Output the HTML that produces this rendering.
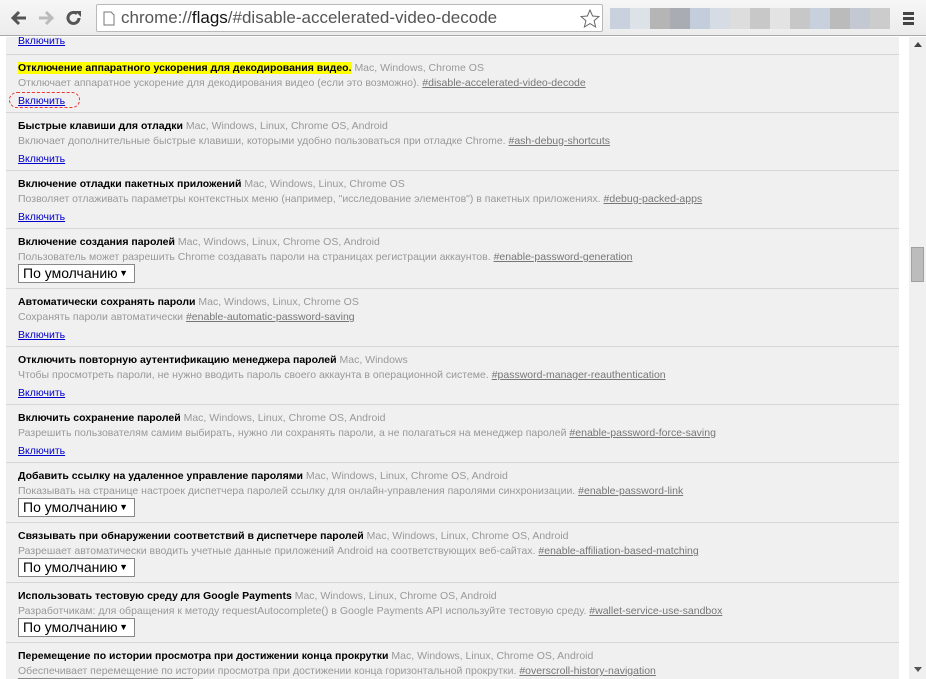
<!DOCTYPE html><html><head><meta charset="utf-8"><style>
*{margin:0;padding:0;box-sizing:border-box}
html,body{width:926px;height:679px;overflow:hidden}
body{background:#fff;font-family:"Liberation Sans","Noto Sans CJK SC",sans-serif;position:relative}
#tb{position:absolute;left:0;top:0;width:926px;height:36px;background:linear-gradient(#f6f6f6,#ececec);border-bottom:1px solid #a8a8a8}
#omni{position:absolute;left:96px;top:4px;width:507px;height:28px;background:#fff;border:1px solid #b9b9b9;border-radius:2px;font-size:17px;color:#555;line-height:26px;padding-left:24px}
#omni b{font-weight:normal;color:#111}
#content{position:absolute;left:6px;top:37px;width:893px;height:642px;background:#f0f0f0}
#sb{position:absolute;left:909px;top:37px;width:17px;height:642px;background:#f0f0f0}
.row{position:absolute;left:6px;width:893px;border-top:1px solid #d6d6d6;font-size:10.5px}
.t{position:absolute;left:12px;color:#000;font-weight:bold;white-space:nowrap}
.t span{font-weight:normal;color:#999}
.d{position:absolute;left:12px;color:#999;white-space:nowrap}
.d u{color:#777}
.l{position:absolute;left:12px;color:#00c;text-decoration:underline;font-size:10.5px}
.s{position:absolute;left:12px;width:117px;height:19px;background:#fff;border:1px solid #888;font-size:14px;line-height:17px;padding-left:4px;color:#000}
.s i{position:absolute;right:6px;top:0;font-style:normal;font-size:9px}
.px{position:absolute;width:20px;height:21px}
</style></head><body>
<div id="tb">
<svg style="position:absolute;left:10px;top:10px" width="18" height="16"><path d="M16 8H4M9 2L3 8l6 6" stroke="#555" stroke-width="3" fill="none"/></svg>
<svg style="position:absolute;left:37px;top:10px" width="18" height="16"><path d="M2 8h12M9 2l6 6-6 6" stroke="#bbb" stroke-width="3" fill="none"/></svg>
<svg style="position:absolute;left:65px;top:9px" width="18" height="18"><path d="M14 9a5.5 5.5 0 1 1-2-4.3" stroke="#555" stroke-width="3" fill="none"/><path d="M10 2h6v6z" fill="#555"/></svg>
<div id="omni">chrome://<b>flags</b>/#disable-accelerated-video-decode
<svg style="position:absolute;left:6px;top:6px" width="12" height="15"><path d="M1 1h7l3 3v10H1z" stroke="#777" fill="#fff"/></svg>
<svg style="position:absolute;left:483px;top:4px" width="20" height="20"><path d="M10 1l2.6 6 6.4.5-4.9 4.2 1.5 6.3L10 14.6 4.4 18l1.5-6.3L1 7.5l6.4-.5z" stroke="#666" fill="none"/></svg>
</div>
<div class="px" style="left:610px;top:8px;background:#c9d0de"></div><div class="px" style="left:630px;top:8px;background:#dde1e8"></div><div class="px" style="left:650px;top:8px;background:#b5b5b5"></div><div class="px" style="left:670px;top:8px;background:#a9acb3"></div><div class="px" style="left:690px;top:8px;background:#c4cddc"></div><div class="px" style="left:710px;top:8px;background:#d6dce3"></div><div class="px" style="left:730px;top:8px;background:#ddd"></div><div class="px" style="left:750px;top:8px;background:#c8c8c8"></div><div class="px" style="left:770px;top:8px;background:#e3e3e3"></div><div class="px" style="left:790px;top:8px;background:#c7c7c7"></div><div class="px" style="left:810px;top:8px;background:#c8cfdd"></div><div class="px" style="left:830px;top:8px;background:#bbb"></div><div class="px" style="left:850px;top:8px;background:#c3c8d2"></div><div class="px" style="left:870px;top:8px;background:#ccc"></div>
<div style="position:absolute;left:903px;top:12px;width:11px;height:3px;background:#444;box-shadow:0 5px #444,0 10px #444"></div>
</div>
<div id="content"></div>
<div id="sb"><div style="position:absolute;left:5px;top:5px;border:4px solid transparent;border-bottom:5px solid #444;border-top:0"></div>
<div style="position:absolute;left:2px;top:210px;width:13px;height:35px;background:#bcbcbc;border:1px solid #a0a0a0"></div>
<div style="position:absolute;left:5px;top:630px;border:4px solid transparent;border-top:5px solid #555;border-bottom:0"></div></div>

<div class="l" style="left:18px;top:35px">Включить</div>

<div class="row" style="top:54px;height:58px"><div class="t" style="top:7px"><em style="font-style:normal;background:#ff0">Отключение аппаратного ускорения для декодирования видео.</em> <span>Mac, Windows, Chrome OS</span></div><div class="d" style="top:22px">Отключает аппаратное ускорение для декодирования видео (если это возможно). <u>#disable-accelerated-video-decode</u></div><div style="position:absolute;left:3px;top:37px;width:71px;height:16px;border:1.5px dashed #e33;border-radius:8px"></div><div class="l" style="top:40px">Включить</div></div>

<div class="row" style="top:112px;height:58px"><div class="t" style="top:7px">Быстрые клавиши для отладки <span>Mac, Windows, Linux, Chrome OS, Android</span></div><div class="d" style="top:22px">Включает дополнительные быстрые клавиши, которыми удобно пользоваться при отладке Chrome. <u>#ash-debug-shortcuts</u></div><div class="l" style="top:40px">Включить</div></div>

<div class="row" style="top:170px;height:58px"><div class="t" style="top:7px">Включение отладки пакетных приложений <span>Mac, Windows, Linux, Chrome OS</span></div><div class="d" style="top:22px">Позволяет отлаживать параметры контекстных меню (например, "исследование элементов") в пакетных приложениях. <u>#debug-packed-apps</u></div><div class="l" style="top:40px">Включить</div></div>

<div class="row" style="top:228px;height:60px"><div class="t" style="top:7px">Включение создания паролей <span>Mac, Windows, Linux, Chrome OS, Android</span></div><div class="d" style="top:22px">Пользователь может разрешить Chrome создавать пароли на страницах регистрации аккаунтов. <u>#enable-password-generation</u></div><div class="s" style="top:35px">По умолчанию<i>▼</i></div></div>

<div class="row" style="top:288px;height:58px"><div class="t" style="top:7px">Автоматически сохранять пароли <span>Mac, Windows, Linux, Chrome OS</span></div><div class="d" style="top:22px">Сохранять пароли автоматически <u>#enable-automatic-password-saving</u></div><div class="l" style="top:40px">Включить</div></div>

<div class="row" style="top:346px;height:58px"><div class="t" style="top:7px">Отключить повторную аутентификацию менеджера паролей <span>Mac, Windows</span></div><div class="d" style="top:22px">Чтобы просмотреть пароли, не нужно вводить пароль своего аккаунта в операционной системе. <u>#password-manager-reauthentication</u></div><div class="l" style="top:40px">Включить</div></div>

<div class="row" style="top:404px;height:58px"><div class="t" style="top:7px">Включить сохранение паролей <span>Mac, Windows, Linux, Chrome OS, Android</span></div><div class="d" style="top:22px">Разрешить пользователям самим выбирать, нужно ли сохранять пароли, а не полагаться на менеджер паролей <u>#enable-password-force-saving</u></div><div class="l" style="top:40px">Включить</div></div>

<div class="row" style="top:462px;height:60px"><div class="t" style="top:7px">Добавить ссылку на удаленное управление паролями <span>Mac, Windows, Linux, Chrome OS, Android</span></div><div class="d" style="top:22px">Показывать на странице настроек диспетчера паролей ссылку для онлайн-управления паролями синхронизации. <u>#enable-password-link</u></div><div class="s" style="top:35px">По умолчанию<i>▼</i></div></div>

<div class="row" style="top:522px;height:60px"><div class="t" style="top:7px">Связывать при обнаружении соответствий в диспетчере паролей <span>Mac, Windows, Linux, Chrome OS, Android</span></div><div class="d" style="top:22px">Разрешает автоматически вводить учетные данные приложений Android на соответствующих веб-сайтах. <u>#enable-affiliation-based-matching</u></div><div class="s" style="top:35px">По умолчанию<i>▼</i></div></div>

<div class="row" style="top:582px;height:60px"><div class="t" style="top:7px">Использовать тестовую среду для Google Payments <span>Mac, Windows, Linux, Chrome OS, Android</span></div><div class="d" style="top:22px">Разработчикам: для обращения к методу requestAutocomplete() в Google Payments API используйте тестовую среду. <u>#wallet-service-use-sandbox</u></div><div class="s" style="top:35px">По умолчанию<i>▼</i></div></div>

<div class="row" style="top:642px;height:37px;overflow:hidden"><div class="t" style="top:7px">Перемещение по истории просмотра при достижении конца прокрутки <span>Mac, Windows, Linux, Chrome OS, Android</span></div><div class="d" style="top:22px">Обеспечивает перемещение по истории просмотра при достижении конца горизонтальной прокрутки. <u>#overscroll-history-navigation</u></div><div class="s" style="top:35px;width:175px"></div></div>
</body></html>
